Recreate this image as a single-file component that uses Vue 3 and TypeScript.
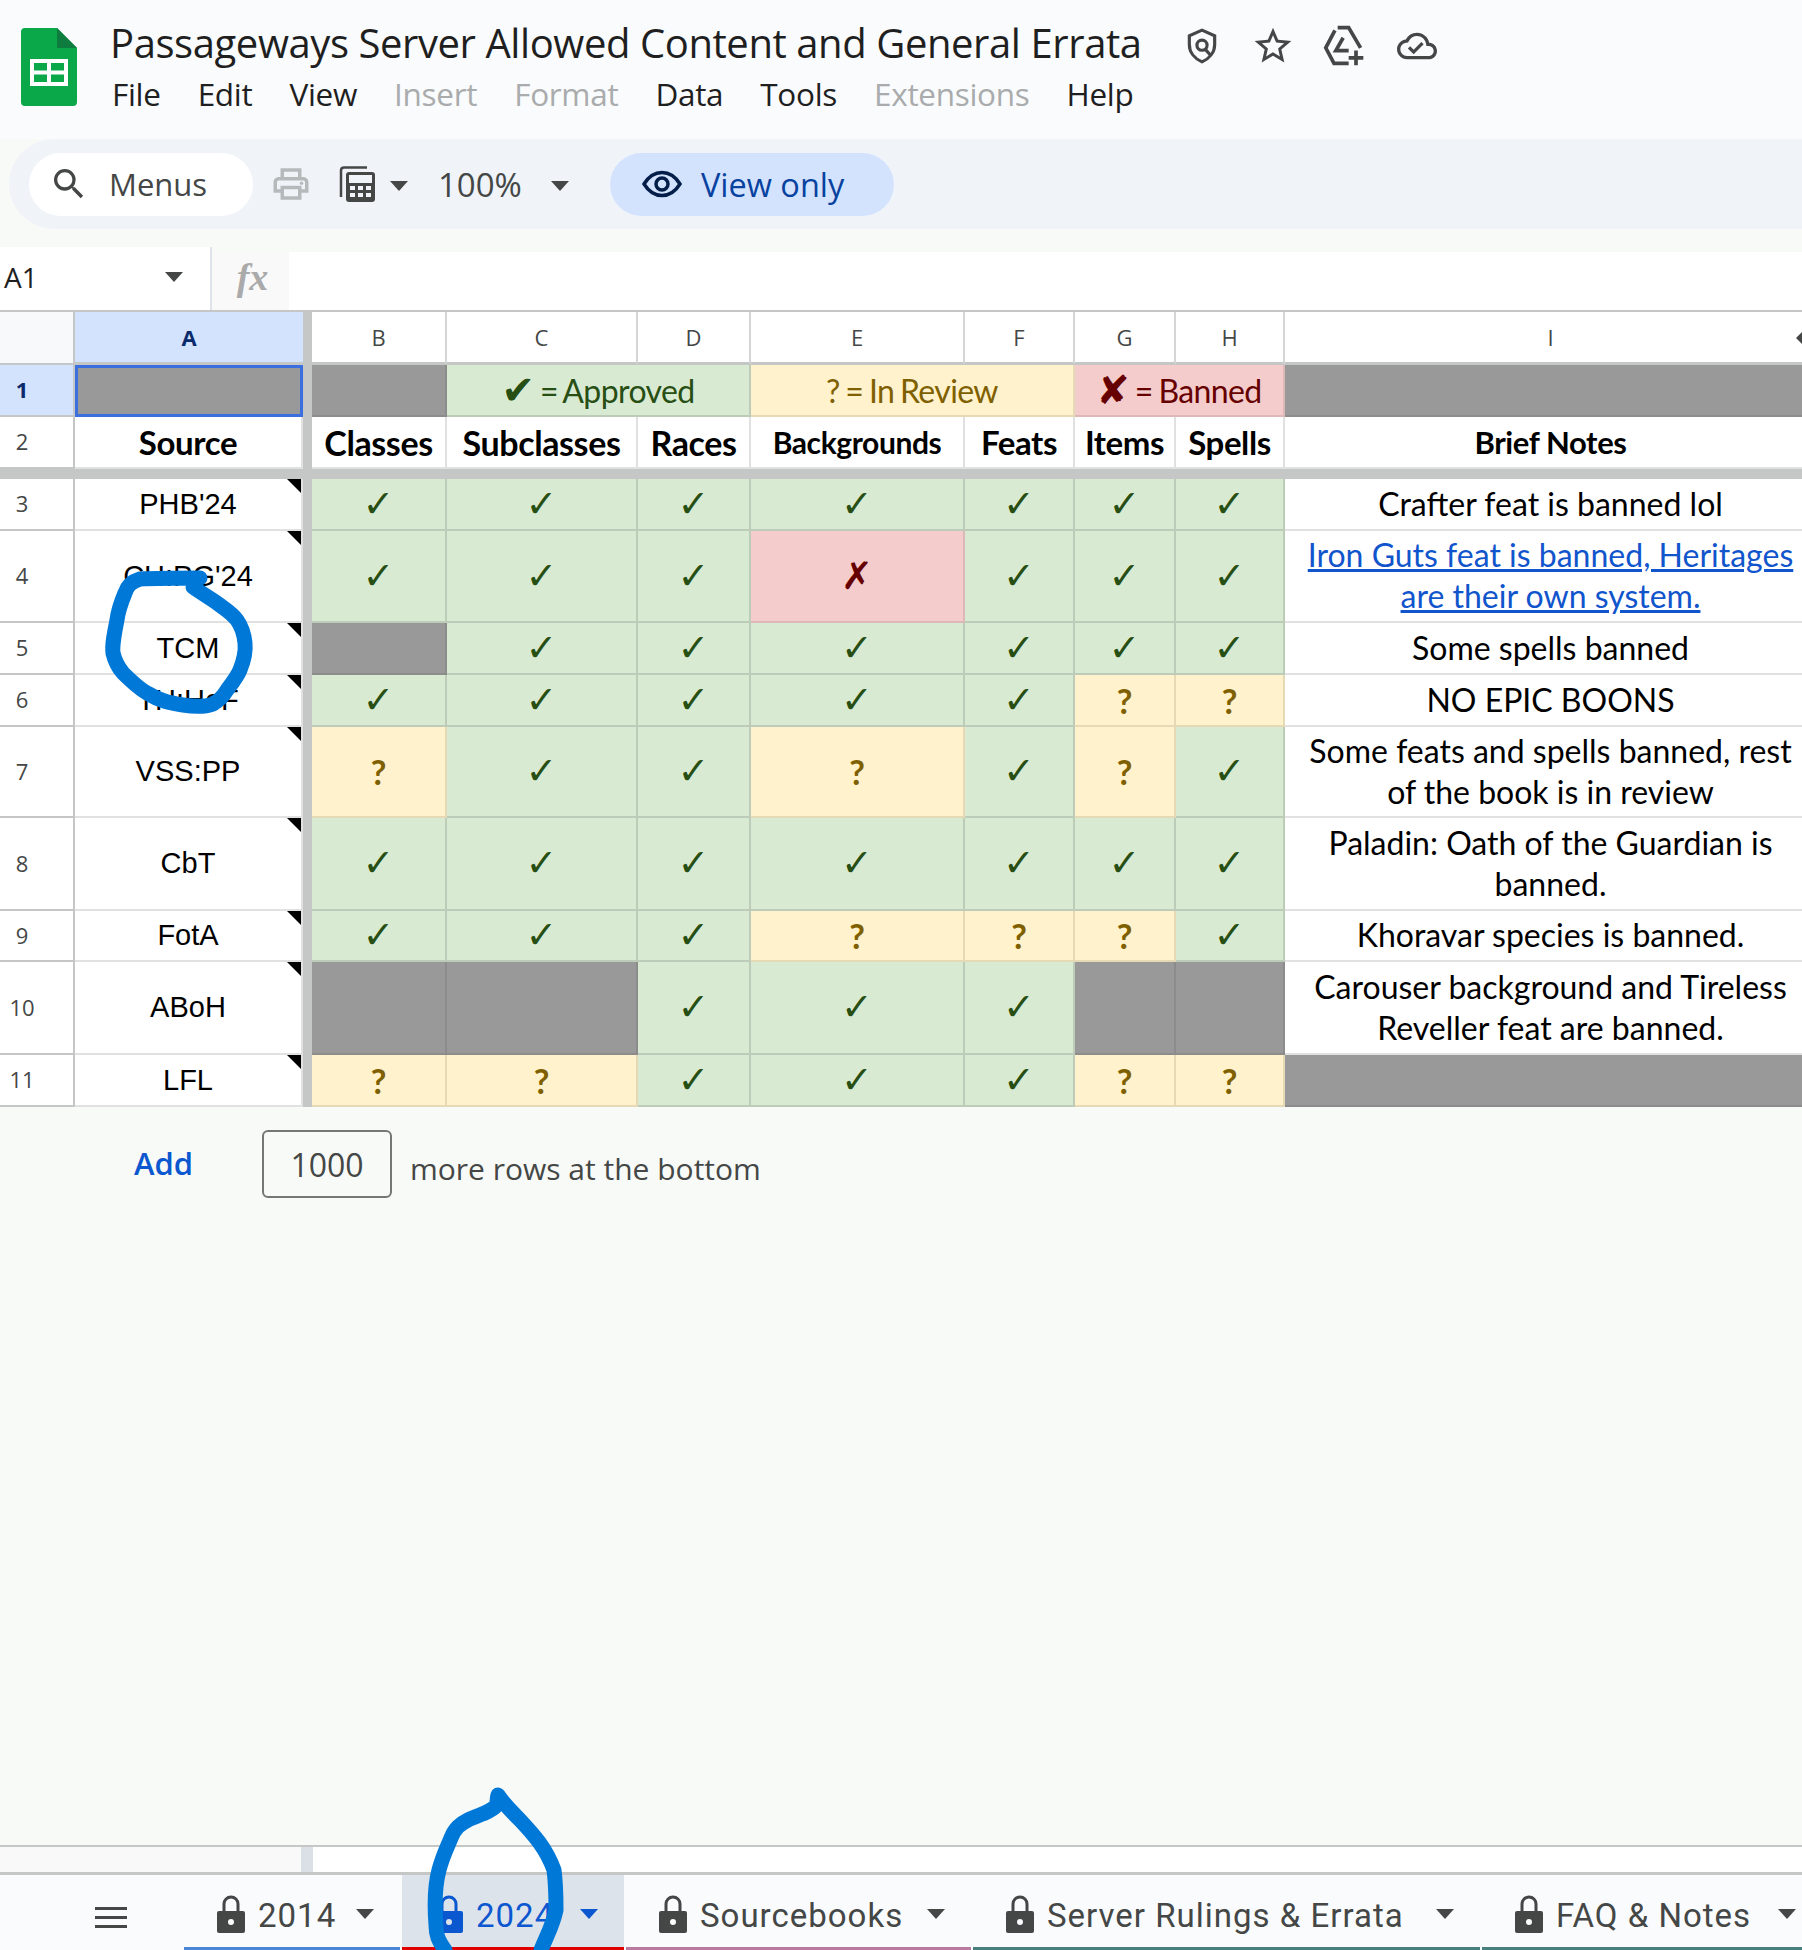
<template>
  <div class="page">
    <!-- title + menus -->
    <header class="topbar">
      <svg class="logo" viewBox="0 0 56 78">
        <path d="M4 0H36L56 20V74a4 4 0 0 1-4 4H4a4 4 0 0 1-4-4V4a4 4 0 0 1 4-4z" fill="#0ba84a" />
        <path d="M36 0L56 20H36z" fill="#0f7c3f" />
        <path d="M9 31H47V58H9zM13 35V42.5H26V35zM30 35V42.5H43V35zM13 46.5V54H26V46.5zM30 46.5V54H43V46.5z" fill="#fff" fill-rule="evenodd" />
      </svg>
      <div class="titles">
        <div class="title-row">
          <span class="doc-title">Passageways Server Allowed Content and General Errata</span>
          <svg class="ti shield" viewBox="0 0 24 24" fill="none" stroke="#444746" stroke-width="2">
            <path d="M12 2l8 3.500V11c0 5-3.400 9-8 11-4.600-2-8-6-8-11V5.500z" />
            <circle cx="12" cy="11.500" r="3.200" />
            <path d="M14 14l3.500 4" />
          </svg>
          <svg class="ti star" viewBox="0 0 24 24"><path fill="#444746" d="M22 9.240l-7.190-.62L12 2 9.190 8.630 2 9.240l5.460 4.730L5.820 21 12 17.270 18.180 21l-1.630-7.030L22 9.240zM12 15.400l-3.760 2.270 1-4.280-3.320-2.880 4.380-.38L12 6.100l1.710 4.040 4.380.38-3.320 2.880 1 4.280L12 15.400z" /></svg>
          <svg class="ti drive" viewBox="0 0 24 24" fill="none" stroke="#444746" stroke-width="2">
            <path d="M8 2h6l6.500 11" />
            <path d="M6.500 3.500L1.500 13l4.500 8.500h8" />
            <path d="M11 7.500L7 14.500h7" />
            <path d="M18 14.500v8M14 18.500h8" />
          </svg>
          <svg class="ti cloud" viewBox="0 0 24 24"><path fill="#444746" d="M19.350 10.040C18.670 6.590 15.640 4 12 4 9.110 4 6.600 5.640 5.350 8.040 2.340 8.360 0 10.910 0 14c0 3.310 2.690 6 6 6h13c2.760 0 5-2.240 5-5 0-2.640-2.050-4.780-4.650-4.960zM19 18H6c-2.210 0-4-1.790-4-4 0-2.050 1.530-3.760 3.560-3.970l1.070-.11.5-.95C8.080 7.140 9.940 6 12 6c2.620 0 4.880 1.860 5.390 4.430l.3 1.500 1.530.11c1.560.1 2.780 1.410 2.780 2.960 0 1.650-1.350 3-3 3zm-9-3.820l-2.090-2.090L6.500 13.500 10 17l6.010-6.010-1.410-1.410L10 14.180z" /></svg>
        </div>
        <nav class="menus">
          <span v-for="m in menus" :key="m.label" :class="{ off: m.off }">{{ m.label }}</span>
        </nav>
      </div>
    </header>

    <!-- toolbar -->
    <div class="toolbar">
      <div class="search">
        <svg class="search-icon" viewBox="0 0 24 24"><path fill="#444746" d="M15.500 14h-.79l-.28-.27A6.470 6.470 0 0 0 16 9.500 6.500 6.500 0 1 0 9.500 16c1.610 0 3.090-.59 4.230-1.570l.27.28v.79l5 4.990L20.490 19l-4.990-5zm-6 0C7.010 14 5 11.990 5 9.500S7.010 5 9.500 5 14 7.010 14 9.500 11.990 14 9.500 14z" /></svg>
        <span>Menus</span>
      </div>
      <svg class="print" viewBox="0 0 24 24"><path fill="#b6b9ba" d="M19 8h-1V3H6v5H5c-1.660 0-3 1.340-3 3v6h4v4h12v-4h4v-6c0-1.660-1.340-3-3-3zM8 5h8v3H8V5zm8 12v2H8v-4h8v2zm2-2v-2H6v2H4v-4c0-.55.45-1 1-1h14c.55 0 1 .45 1 1v4h-2z" /><circle cx="18" cy="11.500" r="1" fill="#b6b9ba" /></svg>
      <svg class="calc" viewBox="0 0 36 36">
        <path d="M2 31V4.500Q2 1.500 5 1.500H28" fill="none" stroke="#444746" stroke-width="2.500" />
        <rect x="7" y="6" width="29" height="30" rx="3" fill="#444746" />
        <rect x="10" y="9" width="23" height="8" fill="#f0f4f9" />
        <path d="M11 20h5v4h-5zM19 20h5v4h-5zM27 20h5v4h-5zM11 27h5v4h-5zM19 27h5v4h-5zM27 27h5v4h-5z" fill="#f0f4f9" />
      </svg>
      <i class="caret calc-caret"></i>
      <span class="zoom">100%</span>
      <i class="caret zoom-caret"></i>
      <div class="viewonly">
        <svg class="eye" viewBox="0 0 40 28" fill="none" stroke="#041e49" stroke-width="3.500">
          <path d="M2 14C7 6 13 2.500 20 2.500S33 6 38 14C33 22 27 25.500 20 25.500S7 22 2 14z" />
          <circle cx="20" cy="14" r="6" />
        </svg>
        <span>View only</span>
      </div>
    </div>

    <!-- name box + formula bar -->
    <div class="formula">
      <div class="namebox"><span>A1</span><i class="caret"></i></div>
      <div class="fx">fx</div>
    </div>

    <!-- sheet -->
    <div class="sheet">
      <div class="row head-row" :style="{ height: '55px' }">
        <div class="corner"></div>
        <div class="col-a">A</div>
        <div class="freeze"></div>
        <div v-for="c in letters" :key="c" class="col">{{ c }}</div>
        <i class="collapse"></i>
      </div>

      <div class="row" :style="{ height: '52px' }">
        <div class="rh rh-on">1</div>
        <div class="cell grey selected"></div>
        <div class="freeze"></div>
        <div class="cell grey"></div>
        <div class="cell ok legend span2"><span class="lg-mark">✔</span> = Approved</div>
        <div class="cell maybe legend span2">? = In Review</div>
        <div class="cell no legend span2"><span class="lg-mark">✘</span> = Banned</div>
        <div class="cell grey"></div>
      </div>

      <div class="row" :style="{ height: '52px' }">
        <div class="rh">2</div>
        <div class="cell strong" :style="{ fontSize: '33px' }">Source</div>
        <div class="freeze"></div>
        <div v-for="h in headings" :key="h.label" class="cell strong" :style="{ fontSize: h.size + 'px' }">{{ h.label }}</div>
      </div>

      <div class="freeze-h"></div>

      <div v-for="r in rows" :key="r.num" class="row" :style="{ height: r.h + 'px' }">
        <div class="rh">{{ r.num }}</div>
        <div class="cell source">{{ r.source }}<i class="note"></i></div>
        <div class="freeze"></div>
        <div v-for="(s, i) in r.marks.split('')" :key="i" class="cell mark" :class="markClass[s]">{{ markText[s] }}</div>
        <div v-if="!r.note" class="cell grey"></div>
        <div v-else-if="r.link" class="cell notes"><a class="link">{{ r.note }}</a></div>
        <div v-else class="cell notes">{{ r.note }}</div>
      </div>

      <div class="add-row">
        <span class="add">Add</span>
        <span class="count">1000</span>
        <span class="more">more rows at the bottom</span>
      </div>
    </div>

    <!-- horizontal scroll strip -->
    <div class="scrollbar">
      <div class="scroll-left"></div>
      <div class="scroll-thumb"></div>
    </div>

    <!-- tabs -->
    <footer class="tabs">
      <div class="burger"><b></b><b></b><b></b></div>
      <div v-for="t in tabs" :key="t.label" class="tab" :class="{ active: t.active }" :style="{ borderBottomColor: t.color }">
        <svg class="lock" viewBox="0 0 28 38">
          <path d="M7 18V9a7 7 0 0 1 14 0v9" fill="none" stroke="currentColor" stroke-width="3" />
          <path fill-rule="evenodd" fill="currentColor" d="M2 16H26a2 2 0 0 1 2 2V36a2 2 0 0 1-2 2H2a2 2 0 0 1-2-2V18a2 2 0 0 1 2-2zM14 24a3 3 0 1 0 0 6 3 3 0 0 0 0-6z" />
        </svg>
        <span class="tab-label">{{ t.label }}</span>
        <i class="caret tab-caret"></i>
      </div>
    </footer>

    <!-- pen marks drawn over the screenshot -->
    <svg class="scribble" viewBox="0 0 1802 1950" fill="none" stroke="#0078d7" stroke-width="15" stroke-linecap="round" stroke-linejoin="round">
      <path d="M200 578C180 578 160 578 140 579C130 582 127 587 125 593C120 605 118 612 117 620C114 635 112 645 113 653C115 662 118 667 123 673C132 682 138 688 147 693C160 701 170 703 183 705C195 707 205 707 213 704C220 700 224 695 227 690C233 682 237 677 240 670C244 660 246 652 245 643C244 633 242 627 237 620C232 613 225 609 217 603C208 597 200 592 193 587" />
      <path d="M445 1950C438 1940 436 1935 436 1925C434 1900 435 1885 439 1870C443 1855 447 1848 451 1838C455 1828 460 1824 468 1820C478 1815 490 1813 497 1805C497 1800 497 1798 498 1795C503 1803 510 1810 520 1820C534 1835 546 1848 554 1870C556 1885 556 1895 556 1910C553 1925 547 1935 541 1950" />
    </svg>
  </div>
</template>

<script setup lang="ts">
interface SheetRow {
  num: number;
  source: string;
  marks: string;
  note: string;
  h: number;
  link?: boolean;
}

const menus = [
  { label: 'File' },
  { label: 'Edit' },
  { label: 'View' },
  { label: 'Insert', off: true },
  { label: 'Format', off: true },
  { label: 'Data' },
  { label: 'Tools' },
  { label: 'Extensions', off: true },
  { label: 'Help' },
];

const letters = ['B', 'C', 'D', 'E', 'F', 'G', 'H', 'I'];

const headings = [
  { label: 'Classes', size: 34 },
  { label: 'Subclasses', size: 34 },
  { label: 'Races', size: 34 },
  { label: 'Backgrounds', size: 30 },
  { label: 'Feats', size: 33 },
  { label: 'Items', size: 33 },
  { label: 'Spells', size: 33 },
  { label: 'Brief Notes', size: 31 },
];

const markClass: Record<string, string> = { c: 'ok', q: 'maybe', x: 'no', g: 'grey' };
const markText: Record<string, string> = { c: '✓', q: '?', x: '✗', g: '' };

const rows: SheetRow[] = [
  { num: 3, source: "PHB'24", marks: 'ccccccc', note: 'Crafter feat is banned lol', h: 52 },
  { num: 4, source: "CH:PG'24", marks: 'cccxccc', note: 'Iron Guts feat is banned, Heritages are their own system.', h: 92, link: true },
  { num: 5, source: 'TCM', marks: 'gcccccc', note: 'Some spells banned', h: 52 },
  { num: 6, source: 'TH:HoF', marks: 'cccccqq', note: 'NO EPIC BOONS', h: 52 },
  { num: 7, source: 'VSS:PP', marks: 'qccqcqc', note: 'Some feats and spells banned, rest of the book is in review', h: 91 },
  { num: 8, source: 'CbT', marks: 'ccccccc', note: 'Paladin: Oath of the Guardian is banned.', h: 93 },
  { num: 9, source: 'FotA', marks: 'cccqqqc', note: 'Khoravar species is banned.', h: 51 },
  { num: 10, source: 'ABoH', marks: 'ggcccgg', note: 'Carouser background and Tireless Reveller feat are banned.', h: 93 },
  { num: 11, source: 'LFL', marks: 'qqcccqq', note: '', h: 52 },
];

const tabs = [
  { label: '2014', color: '#4a86d8' },
  { label: '2024', color: '#e00000', active: true },
  { label: 'Sourcebooks', color: '#b87aa0' },
  { label: 'Server Rulings & Errata', color: '#4a7f80' },
  { label: 'FAQ & Notes', color: '#4a7f80' },
];
</script>

<style>
html,
body {
  margin: 0;
  background: #f8faf7;
}
</style>

<style scoped>
.page {
  position: relative;
  width: 1802px;
  height: 1950px;
  overflow: hidden;
  display: flex;
  flex-direction: column;
  background: #f8faf7;
  font-family: "Lato", "Liberation Sans", sans-serif;
  color: #000;
}

.topbar {
  height: 139px;
  flex: none;
  display: flex;
  background: #f9fbfd;
  box-sizing: border-box;
  padding: 28px 0 0 21px;
}
.logo {
  width: 56px;
  height: 78px;
  flex: none;
}
.titles {
  margin-left: 33px;
}
.title-row {
  display: flex;
  align-items: center;
  height: 36px;
}
.doc-title {
  font-family: "Open Sans", sans-serif;
  font-size: 40px;
  color: #1f1f1f;
  white-space: nowrap;
  width: 1073px;
  margin-bottom: 8px;
  letter-spacing: -0.42px;
}
.ti {
  flex: none;
}
.shield {
  width: 38px;
  height: 38px;
}
.star {
  width: 44px;
  height: 44px;
  margin-left: 30px;
}
.drive {
  width: 44px;
  height: 44px;
  margin-left: 28px;
}
.cloud {
  width: 40px;
  height: 40px;
  margin-left: 30px;
}
.menus {
  display: flex;
  gap: 37px;
  margin-top: 8px;
  margin-left: 2px;
  font-family: "Open Sans", sans-serif;
  font-size: 31.5px;
  color: #1f1f1f;
  letter-spacing: -0.3px;
}
.menus .off {
  color: #a9abac;
}

.toolbar {
  height: 90px;
  flex: none;
  margin-left: 9px;
  display: flex;
  align-items: center;
  background: #f0f4f9;
  border-radius: 45px 0 0 45px;
}
.search {
  width: 224px;
  height: 63px;
  margin-left: 20px;
  flex: none;
  display: flex;
  align-items: center;
  background: #fff;
  border-radius: 32px;
  font-family: "Open Sans", sans-serif;
  font-size: 31px;
  color: #444746;
}
.search-icon {
  width: 40px;
  height: 40px;
  margin-left: 20px;
  margin-right: 20px;
}
.print {
  width: 42px;
  height: 42px;
  margin-left: 17px;
  flex: none;
}
.calc {
  width: 36px;
  height: 36px;
  margin-left: 27px;
  flex: none;
}
.caret {
  width: 0;
  height: 0;
  flex: none;
  border-left: 9px solid transparent;
  border-right: 9px solid transparent;
  border-top: 10px solid currentColor;
  color: #444746;
}
.calc-caret {
  margin-left: 15px;
  margin-top: 3px;
}
.zoom {
  margin-left: 30px;
  font-family: "Open Sans", sans-serif;
  font-size: 33px;
  color: #444746;
}
.zoom-caret {
  margin-left: 29px;
  margin-top: 3px;
}
.viewonly {
  width: 284px;
  height: 63px;
  margin-left: 41px;
  flex: none;
  display: flex;
  align-items: center;
  background: #d3e3fd;
  border-radius: 32px;
  font-family: "Open Sans", sans-serif;
  font-size: 32.5px;
  font-weight: 500;
  color: #0842a0;
}
.eye {
  width: 40px;
  height: 28px;
  margin-left: 32px;
  margin-right: 19px;
}

.formula {
  margin-top: 23px;
  height: 58px;
  flex: none;
  display: flex;
  background: #fff;
}
.namebox {
  width: 212px;
  height: 63px;
  margin-top: -5px;
  flex: none;
  box-sizing: border-box;
  padding: 0 27px 4px 4px;
  display: flex;
  align-items: center;
  justify-content: space-between;
  background: #fff;
  border-right: 2px solid #dfe3ea;
  font-family: "Open Sans", sans-serif;
  font-size: 28px;
  color: #1f1f1f;
}
.fx {
  width: 77px;
  padding-left: 4px;
  box-sizing: border-box;
  text-align: center;
  background: #f9f9f9;
  font-family: "Liberation Serif", serif;
  font-style: italic;
  font-weight: 700;
  font-size: 38px;
  line-height: 50px;
  color: #aaa;
}

.sheet {
  flex: 1;
  min-height: 0;
}
.row {
  display: grid;
  grid-template-columns: 75px 228px 9px 135px 191px 113px 214px 110px 101px 109px 533px;
  position: relative;
}
.head-row {
  border-top: 2px solid #c4c7c5;
  box-sizing: border-box;
  background: #fff;
}
.corner {
  background: #f8f9fa;
  border-right: 2px solid #c4c7c5;
  border-bottom: 2px solid #c4c7c5;
}
.col-a,
.col {
  display: flex;
  align-items: center;
  justify-content: center;
  box-sizing: border-box;
  font-family: "Open Sans", sans-serif;
  font-size: 22px;
  color: #444746;
  border-bottom: 3px solid #c4c7c5;
}
.col {
  border-right: 2px solid #d4d6d6;
}
.col-a {
  background: #d3e3fd;
  color: #0b2a6b;
  font-weight: 700;
}
.collapse {
  position: absolute;
  left: 1796px;
  top: 20px;
  width: 0;
  height: 0;
  border-top: 6px solid transparent;
  border-bottom: 6px solid transparent;
  border-right: 6px solid #444746;
}
.freeze {
  background: #c4c7c5;
}
.freeze-h {
  height: 10px;
  background: #c4c7c5;
}
.rh {
  box-sizing: border-box;
  padding: 0 29px 2px 0;
  display: flex;
  align-items: center;
  justify-content: center;
  background: #fff;
  border-right: 2px solid #c4c7c5;
  border-bottom: 2px solid #c4c7c5;
  font-family: "Open Sans", sans-serif;
  font-size: 22px;
  color: #444746;
}
.rh-on {
  background: #d3e3fd;
  color: #0b2a6b;
  font-weight: 700;
}

.cell {
  position: relative;
  box-sizing: border-box;
  display: flex;
  align-items: center;
  justify-content: center;
  text-align: center;
  background: #fff;
  border-right: 2px solid #e1e1e1;
  border-bottom: 2px solid #e1e1e1;
  font-size: 32px;
  line-height: 41px;
  color: #000;
}
.span2 {
  grid-column: span 2;
}
.strong {
  font-weight: 700;
  letter-spacing: -0.4px;
}
.source {
  font-family: "Liberation Sans", sans-serif;
  font-size: 29px;
}
.note {
  position: absolute;
  right: 0;
  top: 0;
  width: 0;
  height: 0;
  border-left: 14px solid transparent;
  border-top: 14px solid #000;
}
.notes {
  padding: 0 14px 2px;
}
.link {
  color: #1155cc;
  text-decoration: underline;
}
.ok {
  background: #d9ead3;
  color: #274e13;
  border-color: #bdccb8;
}
.maybe {
  background: #fff2cc;
  color: #7f6000;
  border-color: #e5d9b6;
}
.no {
  background: #f4cccc;
  color: #660000;
  border-color: #dcb8b8;
}
.grey {
  background: #999;
  border-color: #8c8c8c;
}
.selected {
  border: 3px solid #3b6fe0;
}
.mark {
  font-family: "DejaVu Sans", sans-serif;
  font-size: 38px;
}
.mark.maybe {
  font-family: "Lato", sans-serif;
  font-size: 34px;
  font-weight: 700;
}
.legend {
  font-size: 32px;
  letter-spacing: -0.6px;
  word-spacing: -2px;
  white-space: pre;
}
.lg-mark {
  font-family: "DejaVu Sans", sans-serif;
  font-size: 40px;
  line-height: 41px;
}

.add-row {
  display: flex;
  align-items: flex-start;
  padding: 23px 0 0 134px;
  font-family: "Open Sans", sans-serif;
  font-size: 30px;
}
.add {
  width: 128px;
  margin-top: 12px;
  font-size: 31px;
  font-weight: 600;
  color: #0b57d0;
}
.count {
  width: 130px;
  height: 68px;
  box-sizing: border-box;
  border: 2px solid #747775;
  border-radius: 6px;
  display: flex;
  align-items: center;
  justify-content: center;
  font-size: 32px;
  color: #444746;
}
.more {
  margin: 18px 0 0 18px;
  color: #444746;
}

.scrollbar {
  height: 30px;
  flex: none;
  display: flex;
  box-sizing: border-box;
  background: #fff;
  border-top: 2px solid #c4c7c5;
  border-bottom: 3px solid #c4c7c5;
}
.scroll-left {
  width: 301px;
  background: #f9f9f9;
}
.scroll-thumb {
  width: 12px;
  background: #dbe0e6;
}

.tabs {
  height: 75px;
  flex: none;
  display: grid;
  grid-template-columns: 182px 216px 222px 345px 507px 340px;
  column-gap: 2px;
  background: #f9fbfd;
}
.burger {
  display: flex;
  flex-direction: column;
  gap: 6px;
  padding: 32px 0 0 95px;
  box-sizing: border-box;
}
.burger b {
  display: block;
  width: 32px;
  height: 3px;
  background: #444746;
}
.tab {
  display: flex;
  align-items: center;
  box-sizing: border-box;
  height: 75px;
  padding: 5px 26px 0 33px;
  border-bottom: 3px solid transparent;
  font-family: "Roboto", sans-serif;
  font-size: 33px;
  letter-spacing: 1px;
  color: #444746;
}
.tab.active {
  background: #dde3ea;
  color: #0b57d0;
}
.lock {
  width: 28px;
  height: 38px;
  flex: none;
  margin-right: 13px;
}
.tab-label {
  position: relative;
  top: 2px;
}
.tab-caret {
  color: inherit;
  margin-left: auto;
}
.scribble {
  position: absolute;
  left: 0;
  top: 0;
  width: 1802px;
  height: 1950px;
  pointer-events: none;
}
</style>
